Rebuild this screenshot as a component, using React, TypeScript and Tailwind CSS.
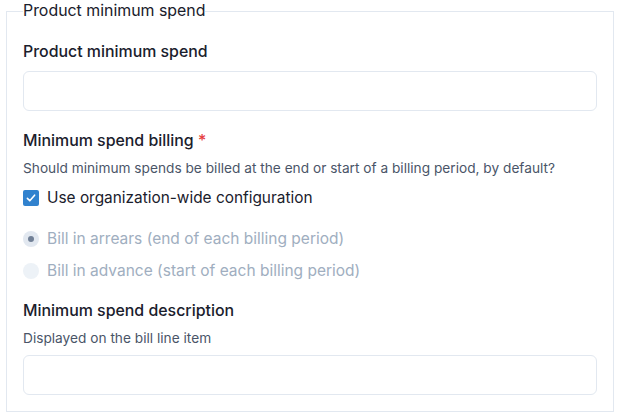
import React from "react";

export default function App() {
  const font = { fontFamily: '"Inter", "Noto Sans", sans-serif' };
  return (
    <div className="w-[618px] h-[417px] bg-white" style={font}>
      <fieldset className="ml-[6px] mr-[4px] border border-[#e2e8f0] px-[16px] pb-[16px] h-[412px]">
        <legend className="text-[15.9px] leading-[22px] text-[#1a202c] px-0">
          Product minimum spend
        </legend>
        <div className="flex flex-col">
          <label className="mt-[19px] text-[15.9px] leading-[22px] font-medium text-[#1a202c]">
            Product minimum spend
          </label>
          <input className="mt-[8px] h-[40px] rounded-[6px] border border-[#e2e8f0] w-[574px] outline-none" />
          <div className="mt-[19px] text-[15.9px] leading-[22px] font-medium text-[#1a202c]">
            Minimum spend billing <span className="text-[#e53e3e]">*</span>
          </div>
          <div className="mt-[6px] text-[13.7px] leading-[20px] text-[#4a5568]">
            Should minimum spends be billed at the end or start of a billing period, by default?
          </div>
          <div className="mt-[9px] flex items-center gap-[8px] h-[22px]">
            <div className="w-[16px] h-[16px] rounded-[2px] bg-[#3182ce] flex items-center justify-center">
              <svg viewBox="0 0 12 10" width="10" height="8" fill="none">
                <polyline points="1.5 5.5 4.5 8.5 10.5 1.5" stroke="white" strokeWidth="2" strokeLinecap="round" strokeLinejoin="round" />
              </svg>
            </div>
            <span className="text-[15.4px] text-[#1a202c]">Use organization-wide configuration</span>
          </div>
          <div className="mt-[19px] flex flex-col gap-[10px]">
            <div className="flex items-center gap-[8px] h-[22px]">
              <div className="w-[16px] h-[16px] rounded-full bg-[#e2e8f0] flex items-center justify-center">
                <div className="w-[6px] h-[6px] rounded-full bg-[#718096]" />
              </div>
              <span className="text-[15.5px] text-[#a0aec0]">Bill in arrears (end of each billing period)</span>
            </div>
            <div className="flex items-center gap-[8px] h-[22px]">
              <div className="w-[16px] h-[16px] rounded-full bg-[#edf2f7]" />
              <span className="text-[15.5px] text-[#a0aec0]">Bill in advance (start of each billing period)</span>
            </div>
          </div>
          <div className="mt-[18px] text-[15.9px] leading-[22px] font-medium text-[#1a202c]">
            Minimum spend description
          </div>
          <div className="mt-[6px] text-[13.7px] leading-[20px] text-[#4a5568]">
            Displayed on the bill line item
          </div>
          <input className="mt-[7px] h-[40px] rounded-[6px] border border-[#e2e8f0] w-[574px] outline-none" />
        </div>
      </fieldset>
    </div>
  );
}
